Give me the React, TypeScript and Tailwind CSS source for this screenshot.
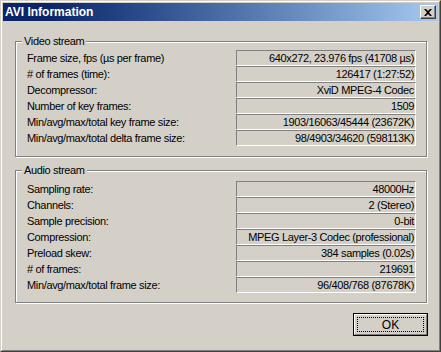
const videoRows = [
  ["Frame size, fps (µs per frame)", "640x272, 23.976 fps (41708 µs)"],
  ["# of frames (time):", "126417 (1:27:52)"],
  ["Decompressor:", "XviD MPEG-4 Codec"],
  ["Number of key frames:", "1509"],
  ["Min/avg/max/total key frame size:", "1903/16063/45444 (23672K)"],
  ["Min/avg/max/total delta frame size:", "98/4903/34620 (598113K)"],
];

const audioRows = [
  ["Sampling rate:", "48000Hz"],
  ["Channels:", "2 (Stereo)"],
  ["Sample precision:", "0-bit"],
  ["Compression:", "MPEG Layer-3 Codec (professional)"],
  ["Preload skew:", "384 samples (0.02s)"],
  ["# of frames:", "219691"],
  ["Min/avg/max/total frame size:", "96/408/768 (87678K)"],
];

function Group({
  title,
  rows,
  className,
}: {
  title: string;
  rows: string[][];
  className: string;
}) {
  return (
    <div
      className={`relative mx-[12px] mr-[11px] border border-[#808080] shadow-[inset_1px_1px_0_#fff,1px_1px_0_#fff] ${className}`}
    >
      {/* group label sits on the etched line */}
      <span className="absolute left-[6px] -top-[8px] bg-[#d4d0c8] px-[2px] leading-[14px]">
        {title}
      </span>
      <div className="grid grid-cols-[1fr_180px] pl-[11px] pr-[10px]">
        {rows.map(([label, value]) => (
          <div key={label} className="contents">
            <div className="h-[16px] leading-[16px] whitespace-nowrap">{label}</div>
            <div className="h-[16px] border-t border-l border-[#808080] border-r-white border-b-white border-r border-b text-right pr-[1px] leading-[14px] whitespace-nowrap">
              {value}
            </div>
          </div>
        ))}
      </div>
    </div>
  );
}

export default function App() {
  return (
    <div
      className="w-[441px] h-[352px] bg-[#d4d0c8] border border-t-[#d4d0c8] border-l-[#d4d0c8] border-r-[#404040] border-b-[#404040] text-[11px] tracking-[-0.35px] text-black"
      style={{ fontFamily: '"Liberation Sans", Arial, sans-serif' }}
    >
      <div className="h-full border border-t-white border-l-white border-r-[#808080] border-b-[#808080] p-[1px] flex flex-col">
        {/* Title bar */}
        <div className="h-[18px] flex items-center justify-between pl-[2px] pr-[2px] bg-gradient-to-r from-[#0a246a] from-[10%] to-[#a6caf0]">
          <span className="text-white font-bold text-[12px] tracking-[0px]">AVI Information</span>
          <button className="w-[16px] h-[14px] bg-[#d4d0c8] border border-t-white border-l-white border-r-[#404040] border-b-[#404040] flex items-center justify-center shadow-[inset_-1px_-1px_0_#808080]">
            <svg width="8" height="7" viewBox="0 0 8 7">
              <path d="M0 0h2l2 2 2-2h2L5 3.5 8 7H6L4 5 2 7H0l3-3.5z" fill="#000" />
            </svg>
          </button>
        </div>

        <Group title="Video stream" rows={videoRows} className="mt-[20px] h-[116px] pt-[8px]" />
        <Group title="Audio stream" rows={audioRows} className="mt-[13px] h-[133px] pt-[10px]" />

        {/* OK button */}
        <div className="flex justify-end mt-[10px] mr-[10px]">
          <button className="w-[75px] h-[23px] border border-black bg-[#d4d0c8]">
            <div className="h-full border border-t-white border-l-white border-r-[#808080] border-b-[#808080] p-[2px]">
              <div className="h-full border border-dotted border-black flex items-center justify-center text-[12px] tracking-[0px] leading-none">
                OK
              </div>
            </div>
          </button>
        </div>
      </div>
    </div>
  );
}
